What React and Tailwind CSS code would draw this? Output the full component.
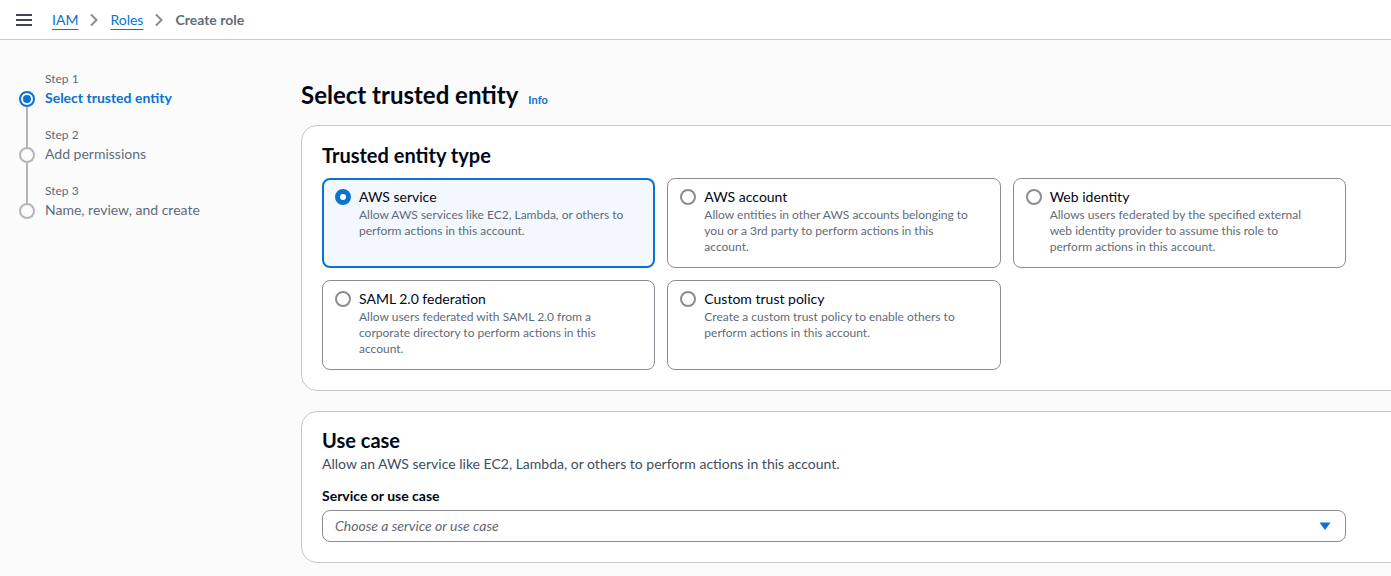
import { useState } from "react";

const tiles = [
  {
    id: "service",
    title: "AWS service",
    lines: ["Allow AWS services like EC2, Lambda, or others to", "perform actions in this account."],
  },
  {
    id: "account",
    title: "AWS account",
    lines: ["Allow entities in other AWS accounts belonging to", "you or a 3rd party to perform actions in this", "account."],
  },
  {
    id: "web",
    title: "Web identity",
    lines: ["Allows users federated by the specified external", "web identity provider to assume this role to", "perform actions in this account."],
  },
  {
    id: "saml",
    title: "SAML 2.0 federation",
    lines: ["Allow users federated with SAML 2.0 from a", "corporate directory to perform actions in this", "account."],
  },
  {
    id: "custom",
    title: "Custom trust policy",
    lines: ["Create a custom trust policy to enable others to", "perform actions in this account."],
  },
];

const steps = [
  { step: "Step 1", label: "Select trusted entity" },
  { step: "Step 2", label: "Add permissions" },
  { step: "Step 3", label: "Name, review, and create" },
];

function Chevron() {
  return (
    <svg width="12" height="16" viewBox="0 0 12 16" fill="none" className="text-[#8c8c94]">
      <path d="M3 2.5 8.5 8 3 13.5" stroke="currentColor" strokeWidth="2" />
    </svg>
  );
}

function Radio({ checked }) {
  if (checked) {
    return <span className="w-4 h-4 rounded-full border-[5px] border-[#0972d3] bg-white shrink-0 mt-[2px]" />;
  }
  return <span className="w-4 h-4 rounded-full border-2 border-[#8c8c94] bg-white shrink-0 mt-[2px]" />;
}

function Tile({ tile, checked, onPick }) {
  return (
    <button
      type="button"
      onClick={onPick}
      className={
        checked
          ? "flex gap-2 text-left h-[90px] rounded-lg border-2 border-[#0972d3] bg-[#f2f8fd] px-[11px] py-[7px]"
          : "flex gap-2 text-left h-[90px] rounded-lg border border-[#8c8c94] bg-white px-3 py-2"
      }
    >
      <Radio checked={checked} />
      <div className="flex flex-col">
        <span className="text-sm leading-5 text-[#000716]">{tile.title}</span>
        <span className="text-xs leading-4 text-[#5f6b7a]">
          {tile.lines.map((l) => (
            <span key={l} className="block whitespace-nowrap">{l}</span>
          ))}
        </span>
      </div>
    </button>
  );
}

export default function App() {
  const [picked, setPicked] = useState("service");

  return (
    <div className="w-full h-[576px] overflow-hidden bg-[#fbfbfb] text-[#000716] font-['Lato','Liberation_Sans',sans-serif]">
      {/* Barra superior */}
      <header className="h-10 bg-white border-b border-[#c6c6cd] flex items-center">
        <button className="ml-4 w-4 flex flex-col gap-[3px]">
          <span className="block h-[2px] w-4 bg-[#424650]" />
          <span className="block h-[2px] w-4 bg-[#424650]" />
          <span className="block h-[2px] w-4 bg-[#424650]" />
        </button>
        <nav className="ml-5 flex items-center gap-[10px] text-sm">
          <a className="text-[#0972d3] underline underline-offset-4 decoration-1">IAM</a>
          <Chevron />
          <a className="text-[#0972d3] underline underline-offset-4 decoration-1">Roles</a>
          <Chevron />
          <span className="font-bold text-[#5f6b7a]">Create role</span>
        </nav>
      </header>

      <div className="flex">
        {/* Pasos */}
        <aside className="w-[301px] shrink-0 pl-[19px] pt-[30px]">
          {steps.map((s, i) => (
            <div key={s.step} className="flex gap-[10px]">
              <div className="flex flex-col items-center w-4">
                {i === 0 ? <div className="h-[21px]" /> : <span className="w-[2px] h-[21px] bg-[#b4b4bb]" />}
                {i === 0 ? (
                  <span className="w-4 h-4 rounded-full border-2 border-[#0972d3] flex items-center justify-center shrink-0">
                    <span className="w-2 h-2 rounded-full bg-[#0972d3]" />
                  </span>
                ) : (
                  <span className="w-4 h-4 rounded-full border-2 border-[#b4b4bb] shrink-0" />
                )}
                {i < steps.length - 1 && <span className="w-[2px] flex-1 bg-[#b4b4bb]" />}
              </div>
              <div className="pb-[18px]">
                <div className="text-xs leading-4 text-[#5f6b7a] mt-[1px]">{s.step}</div>
                <div
                  className={
                    i === 0
                      ? "text-sm leading-5 mt-[1px] font-bold text-[#0972d3]"
                      : "text-sm leading-5 mt-[1px] text-[#5f6b7a]"
                  }
                >
                  {s.label}
                </div>
              </div>
            </div>
          ))}
        </aside>

        {/* Contenido */}
        <main className="w-[1110px] shrink-0 pt-[40px]">
          <div className="flex items-baseline gap-2 h-[30px]">
            <h1 className="text-2xl font-bold leading-[30px] text-[#000716]">Select trusted entity</h1>
            <a className="text-[11px] font-bold text-[#0972d3] ml-[2px]">Info</a>
          </div>

          <section className="mt-[15px] bg-white border border-[#c6c6cd] rounded-2xl px-5 pt-[15px] pb-5">
            <h2 className="text-xl font-bold leading-[28px] mb-[9px]">Trusted entity type</h2>
            <div className="w-[1024px] grid grid-cols-3 gap-3">
              {tiles.map((t) => (
                <Tile key={t.id} tile={t} checked={picked === t.id} onPick={() => setPicked(t.id)} />
              ))}
            </div>
          </section>

          <section className="mt-5 bg-white border border-[#c6c6cd] rounded-2xl px-5 pt-[14px] pb-5">
            <h2 className="text-xl font-bold leading-[28px]">Use case</h2>
            <p className="text-sm leading-5 text-[#414d5c]">
              Allow an AWS service like EC2, Lambda, or others to perform actions in this account.
            </p>
            <label className="block mt-[12px] text-sm leading-5 font-bold">Service or use case</label>
            <div className="mt-[4px] w-[1024px] h-8 rounded-lg border border-[#8c8c94] bg-white flex items-center justify-between pl-3 pr-[14px]">
              <span className="text-sm italic text-[#656871]">Choose a service or use case</span>
              <svg width="12" height="10" viewBox="0 0 12 10">
                <path d="M0.5 1.5h11L6 9z" fill="#0972d3" />
              </svg>
            </div>
          </section>
        </main>
      </div>
    </div>
  );
}
